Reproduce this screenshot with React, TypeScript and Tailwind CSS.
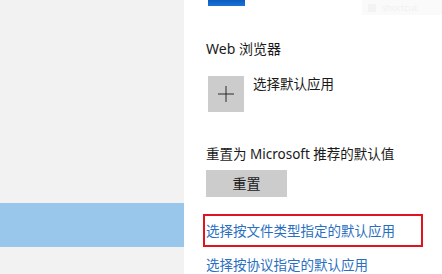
import React from "react";

const font = {
  fontFamily: '"Noto Sans", "Noto Sans CJK SC", sans-serif',
};

function App() {
  return (
    <div
      className="relative flex h-[274px] w-[442px] overflow-hidden bg-white text-[13.5px] text-[#1a1a1a]"
      style={font}
    >
      {/* Left navigation pane */}
      <aside className="flex w-[184px] shrink-0 flex-col bg-[#f2f2f2]">
        <div className="h-[203px]" />
        <div className="h-[44px] bg-[#98c7eb]" />
      </aside>

      {/* Settings content */}
      <main className="flex flex-1 flex-col pl-[22px]">
        {/* Email app icon (cut off at the top) */}
        <div className="ml-[2px] h-[6px] w-[37px] bg-gradient-to-b from-[#0b5cbd] to-[#1a73d6]" />

        <h3 className="mt-[34px] text-[14px] leading-[18px]">Web 浏览器</h3>

        <div className="mt-[18px] flex items-start gap-[9px]">
          <div className="ml-[2px] flex h-[36px] w-[36px] items-center justify-center bg-[#cccccc]">
            <svg width="16" height="16" viewBox="0 0 16 16">
              <path d="M8 0v16M0 8h16" stroke="#2b2b2b" strokeWidth="1" />
            </svg>
          </div>
          <span className="-mt-[1px] leading-[18px]">选择默认应用</span>
        </div>

        <p className="mt-[33px] leading-[18px]">重置为 Microsoft 推荐的默认值</p>

        <button className="mt-[7px] flex h-[29px] w-[81px] items-center justify-center bg-[#cccccc] text-[14px] text-[#1a1a1a]">
          重置
        </button>

        <div className="-ml-[3px] mt-[17px] flex h-[34px] w-[220px] items-center border-2 border-[#e0141e] pl-[1px]">
          <a href="#" className="leading-[18px] text-[#2a6fbf]">
            选择按文件类型指定的默认应用
          </a>
        </div>

        <a href="#" className="mt-[9px] leading-[18px] text-[#2a6fbf]">
          选择按协议指定的默认应用
        </a>
      </main>

      {/* Faint tooltip ghost at top right */}
      <div className="absolute right-0 top-0 flex h-[15px] w-[80px] items-center gap-[6px] bg-[#fafafa] pl-[6px] text-[9px] text-[#f1f1f1]">
        <span className="h-[8px] w-[8px] bg-[#f3f3f3]" />
        <span>shortcut</span>
      </div>
    </div>
  );
}

export default App;
